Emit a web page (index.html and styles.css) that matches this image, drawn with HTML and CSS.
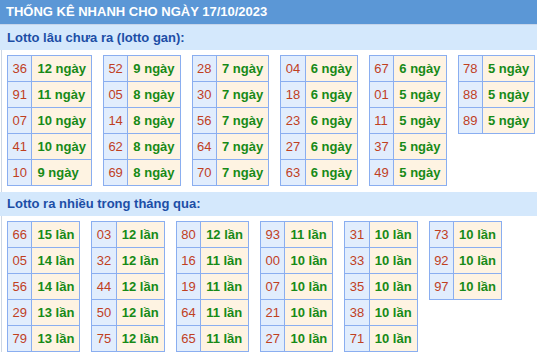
FILE: index.html
```html
<!DOCTYPE html>
<html>
<head>
<meta charset="utf-8">
<link rel="stylesheet" href="styles.css">
</head>
<body>
<div class="head">THỐNG KÊ NHANH CHO NGÀY 17/10/2023</div>
<div class="box">
  <div class="bar">Lotto lâu chưa ra (lotto gan):</div>
  <div class="grid">
    <table><tr><td class="n">36</td><td class="t">12 ngày</td></tr><tr><td class="n">91</td><td class="t">11 ngày</td></tr><tr><td class="n">07</td><td class="t">10 ngày</td></tr><tr><td class="n">41</td><td class="t">10 ngày</td></tr><tr><td class="n">10</td><td class="t">9 ngày</td></tr></table>
    <table><tr><td class="n">52</td><td class="t">9 ngày</td></tr><tr><td class="n">05</td><td class="t">8 ngày</td></tr><tr><td class="n">14</td><td class="t">8 ngày</td></tr><tr><td class="n">62</td><td class="t">8 ngày</td></tr><tr><td class="n">69</td><td class="t">8 ngày</td></tr></table>
    <table><tr><td class="n">28</td><td class="t">7 ngày</td></tr><tr><td class="n">30</td><td class="t">7 ngày</td></tr><tr><td class="n">56</td><td class="t">7 ngày</td></tr><tr><td class="n">64</td><td class="t">7 ngày</td></tr><tr><td class="n">70</td><td class="t">7 ngày</td></tr></table>
    <table><tr><td class="n">04</td><td class="t">6 ngày</td></tr><tr><td class="n">18</td><td class="t">6 ngày</td></tr><tr><td class="n">23</td><td class="t">6 ngày</td></tr><tr><td class="n">27</td><td class="t">6 ngày</td></tr><tr><td class="n">63</td><td class="t">6 ngày</td></tr></table>
    <table><tr><td class="n">67</td><td class="t">6 ngày</td></tr><tr><td class="n">01</td><td class="t">5 ngày</td></tr><tr><td class="n">11</td><td class="t">5 ngày</td></tr><tr><td class="n">37</td><td class="t">5 ngày</td></tr><tr><td class="n">49</td><td class="t">5 ngày</td></tr></table>
    <table><tr><td class="n">78</td><td class="t">5 ngày</td></tr><tr><td class="n">88</td><td class="t">5 ngày</td></tr><tr><td class="n">89</td><td class="t">5 ngày</td></tr></table>
  </div>
  <div class="bar bar2">Lotto ra nhiều trong tháng qua:</div>
  <div class="grid">
    <table><tr><td class="n">66</td><td class="t">15 lần</td></tr><tr><td class="n">05</td><td class="t">14 lần</td></tr><tr><td class="n">56</td><td class="t">14 lần</td></tr><tr><td class="n">29</td><td class="t">13 lần</td></tr><tr><td class="n">79</td><td class="t">13 lần</td></tr></table>
    <table><tr><td class="n">03</td><td class="t">12 lần</td></tr><tr><td class="n">32</td><td class="t">12 lần</td></tr><tr><td class="n">44</td><td class="t">12 lần</td></tr><tr><td class="n">50</td><td class="t">12 lần</td></tr><tr><td class="n">75</td><td class="t">12 lần</td></tr></table>
    <table><tr><td class="n">80</td><td class="t">12 lần</td></tr><tr><td class="n">16</td><td class="t">11 lần</td></tr><tr><td class="n">19</td><td class="t">11 lần</td></tr><tr><td class="n">64</td><td class="t">11 lần</td></tr><tr><td class="n">65</td><td class="t">11 lần</td></tr></table>
    <table><tr><td class="n">93</td><td class="t">11 lần</td></tr><tr><td class="n">00</td><td class="t">10 lần</td></tr><tr><td class="n">07</td><td class="t">10 lần</td></tr><tr><td class="n">21</td><td class="t">10 lần</td></tr><tr><td class="n">27</td><td class="t">10 lần</td></tr></table>
    <table><tr><td class="n">31</td><td class="t">10 lần</td></tr><tr><td class="n">33</td><td class="t">10 lần</td></tr><tr><td class="n">35</td><td class="t">10 lần</td></tr><tr><td class="n">38</td><td class="t">10 lần</td></tr><tr><td class="n">71</td><td class="t">10 lần</td></tr></table>
    <table><tr><td class="n">73</td><td class="t">10 lần</td></tr><tr><td class="n">92</td><td class="t">10 lần</td></tr><tr><td class="n">97</td><td class="t">10 lần</td></tr></table>
  </div>
</div>
</body>
</html>
```
FILE: styles.css
```css
html, body {
  margin: 0;
  padding: 0;
  background: #ffffff;
  font-family: "Liberation Sans", Arial, sans-serif;
}
.head {
  height: 24px;
  line-height: 24px;
  background: #5b97d6;
  color: #ffffff;
  font-weight: bold;
  font-size: 13px;
  padding-left: 6px;
  border-bottom: 1px solid #c6d5ea;
  white-space: nowrap;
}
.box {
  margin-left: 1px;
  border-left: 1px solid #cdd7e4;
}
.bar {
  height: 25px;
  line-height: 25px;
  background: #d4e8fc;
  color: #1c4ea6;
  font-size: 13px;
  font-weight: bold;
  margin-left: -2px;
  padding-left: 7px;
}
.bar2 {
  height: 24px;
  line-height: 24px;
  margin-top: 6px;
}
.grid {
  display: flex;
  align-items: flex-start;
  gap: 11px;
  padding: 5px 0 0 5px;
}
table {
  border-collapse: collapse;
  font-size: 13px;
  line-height: 15px;
}
td {
  border: 1px solid #8aaef0;
  padding: 5px 5px;
  white-space: nowrap;
}
td.n {
  background: #e1edfd;
  color: #c0401f;
  padding: 5px 4.5px;
}
td.t {
  background: #fef3e2;
  color: #178a17;
  font-weight: bold;
}
```
